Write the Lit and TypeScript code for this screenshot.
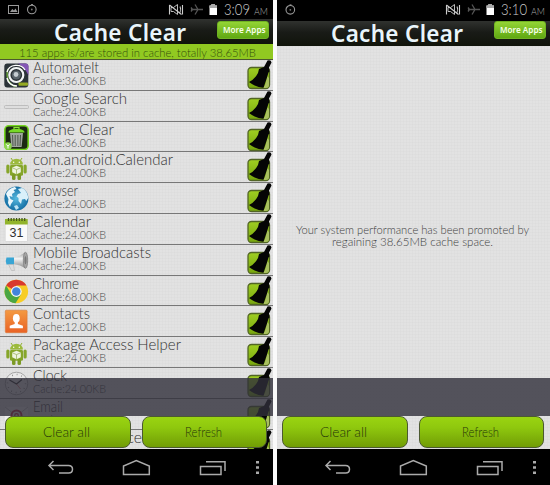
import { LitElement, html, svg, css, nothing } from "lit";
import { customElement, property } from "lit/decorators.js";

const fit = (text: string, width: number, size: number, height: number, base: number, cls = "", adjust = "spacingAndGlyphs") => html`
  <svg class="fit ${cls}" width=${width + 2} height=${height}>
    <text x="0" y=${base} font-size=${size} textLength=${width} lengthAdjust=${adjust}>${text}</text>
  </svg>`;

const android = svg`
  <path d="M7 3l2 3M18 3l-2 3" stroke="#8fae2b" stroke-width="1"/>
  <path d="M6 9.500a6.500 5.800 0 0 1 13 0z" fill="#9cba3c"/>
  <rect x="6" y="9.800" width="13" height="11" rx="1.500" fill="#86a62a"/>
  <rect x="2.300" y="9.500" width="3.200" height="9" rx="1.600" fill="#86a62a"/>
  <rect x="19.500" y="9.500" width="3.200" height="9" rx="1.600" fill="#86a62a"/>
  <rect x="8" y="19" width="3.500" height="6" rx="1.500" fill="#7c9a25"/>
  <rect x="13.500" y="19" width="3.500" height="6" rx="1.500" fill="#7c9a25"/>
  <circle cx="9.700" cy="7.200" r=".7" fill="#fff"/><circle cx="15.300" cy="7.200" r=".7" fill="#fff"/>
  <path d="M12.500 10.800l4.300 1.800v4.600l-4.300 2-4.300-2v-4.600z" fill="#eef3df"/>
  <path d="M8.400 12.800l4.100 1.800 4.100-1.800M12.500 14.600v4.400" stroke="#90aa50" stroke-width=".7" fill="none"/>`;

const icons: Record<string, unknown> = {
  automate: svg`
    <rect x=".3" y=".5" width="24" height="24" rx="3" fill="#2b3338"/>
    <path d="M14 .5h7.500a3 3 0 0 1 3 3v9C22 7 19 3 14 .5z" fill="#8457b5"/>
    <path d="M4 6C1.500 13 4 21 12 24" stroke="#6fae3a" stroke-width="1.300" fill="none"/>
    <path d="M3 9C5 1 17 0 21 7" stroke="#fff" stroke-width="1.300" fill="none"/>
    <circle cx="12.300" cy="12" r="7" fill="#2a3136" stroke="#f2f5f5" stroke-width="2.200"/>
    <circle cx="12.300" cy="12" r="4.500" fill="#59646a"/><circle cx="12" cy="11.500" r="2.400" fill="#c5cdd1"/>
    <path d="M3 15c1 5 5 8 10 8" stroke="#fff" stroke-width="1.500" fill="none"/>
    <rect x="14.500" y="19.600" width="9.500" height="3.200" rx="1" fill="#94a923"/>`,
  search: svg`<rect x=".5" y="11.500" width="24" height="3" rx="1" fill="#dedede" stroke="#b5b5b5" stroke-width=".8"/>`,
  trash: svg`
    <rect x=".8" y=".8" width="23.400" height="23.700" rx="4" fill="#1c2a12" stroke="#74d51d" stroke-width="1.600"/>
    <path d="M6 8h13l-1.400 14H7.400z" fill="#a0a69f"/>
    <path d="M8.500 10l.5 11M11.200 10v11M13.900 10v11M16.500 10l-.5 11" stroke="#454e43" stroke-width=".9"/>
    <path d="M10 4V2.500h5V4" stroke="#8ee43b" fill="none" stroke-width="1.200"/>
    <path d="M4.500 7.500c0-5 16-5 16 0z" fill="#77d928"/>
    <circle cx="4" cy="21" r="3.800" fill="#8fd552"/><path d="M2.300 19.500l1.700 1.500 1.700-1.500M4 21v2.500" stroke="#fff" fill="none" stroke-width="1"/>`,
  android,
  globe: svg`
    <circle cx="12.400" cy="12.500" r="12" fill="url(#globe)"/>
    <path d="M2 8C4 3.500 8 1.500 11 1l1.500 2-3 1 1.500 2-3 2 .5 3-3-1 1 3 3 1.500L7 18l-1 3-2-4 .5-4z" fill="#eaf7fc"/>
    <path d="M14 3l4-1c4 2 6 6 6.200 10l-2 3-1.200-2-3 .5-1 4.500-2.500-3V12l-2-1.500L14 8l3-1z" fill="#d9f0fa"/>
    <path d="M10 20l3-1 2 3-3 2z" fill="#bfe4f4"/>`,
  calendar: svg`
    <rect x="1.200" y="2" width="22.300" height="22.500" rx="1" fill="#fafafa" stroke="#ccc" stroke-width=".6"/>
    <path d="M1 2h22.700v5.500H1z" fill="#92b42c"/>
    <path d="M4.500 1v3M7.200 1v3M9.900 1v3M12.600 1v3M15.300 1v3M18 1v3M20.700 1v3" stroke="#42541a" stroke-width="1.200"/>
    <text x="12.400" y="20" font-size="12.500" font-family="Liberation Sans, sans-serif" font-weight="400" fill="#303030" text-anchor="middle">31</text>`,
  megaphone: svg`
    <path d="M2.500 9.500h7.500v7H2.500q-1.500-3.500 0-7z" fill="#39a5d4"/>
    <path d="M10 9.300c4-.5 8-2.500 11-5v16c-3-2.500-7-3.500-11-4z" fill="url(#metal)"/>
    <ellipse cx="21.500" cy="12.300" rx="2.200" ry="8" fill="#a5a5a5" stroke="#777" stroke-width=".7"/>
    <ellipse cx="21.500" cy="12.300" rx="1" ry="4" fill="#777"/>
    <path d="M4.500 16.500h5l1 6h-3z" fill="#ddd" stroke="#aaa" stroke-width=".5"/>`,
  chrome: svg`
    <circle cx="12.300" cy="12.500" r="11.800" fill="#f7cd25"/>
    <path d="M12.300 12.500L2.080 6.600A11.800 11.800 0 0 1 22.500 6.600H12.300z" fill="#d83a2f"/>
    <path d="M2.080 6.600A11.800 11.800 0 0 0 11.500 24.300l5.600-9-4.800-2.800-4.800 3z" fill="#4ba643"/>
    <circle cx="12.300" cy="12.500" r="5.400" fill="#f7f7f7"/><circle cx="12.300" cy="12.500" r="4.200" fill="#4284dc"/>`,
  contacts: svg`
    <rect x="1.300" y="1.200" width="21.800" height="22.500" rx="1" fill="url(#orange)" stroke="#d97b39" stroke-width=".6"/>
    <ellipse cx="12.300" cy="9.300" rx="3.400" ry="4.300" fill="#fff"/>
    <path d="M10.700 12h3.200v3l5 1.800v2.400H5.700v-2.400l5-1.800z" fill="#fff"/>`,
  clock: svg`
    <circle cx="12.500" cy="12.500" r="11.300" fill="#e9e9e9" stroke="#a5a5a5" stroke-width="1"/>
    <circle cx="12.500" cy="12.500" r="9" fill="none" stroke="#777" stroke-width="1.500" stroke-dasharray=".7 4.010"/>
    <path d="M5.500 9l7 4 5.500-4.500" stroke="#333" stroke-width="1.200" fill="none"/><path d="M12.500 13l4 5" stroke="#c55" stroke-width=".7"/>`,
  email: svg`
    <path d="M1 5h23v16H1z" fill="#eee"/><path d="M1 5l11.500 9L24 5" fill="none" stroke="#bbb"/>
    <circle cx="12.500" cy="13.500" r="5" fill="#eee" stroke="#c12845" stroke-width="2"/>
    <circle cx="12.500" cy="13.500" r="1.800" fill="none" stroke="#c12845" stroke-width="1.300"/>`,
};

const apps: [string, string, number, string][] = [
  ["automate", "AutomateIt", 66, "36.00KB"],
  ["search", "Google Search", 94, "24.00KB"],
  ["trash", "Cache Clear", 81, "36.00KB"],
  ["android", "com.android.Calendar", 140, "24.00KB"],
  ["globe", "Browser", 45, "24.00KB"],
  ["calendar", "Calendar", 58, "24.00KB"],
  ["megaphone", "Mobile Broadcasts", 118, "24.00KB"],
  ["chrome", "Chrome", 46, "68.00KB"],
  ["contacts", "Contacts", 57, "12.00KB"],
  ["android", "Package Access Helper", 148, "24.00KB"],
  ["clock", "Clock", 34, "24.00KB"],
  ["email", "Email", 30, "24.00KB"],
  ["", "Package Service", 109, ""],
];

@customElement("phone-screen")
class PhoneScreen extends LitElement {
  @property() time = "";
  @property({ type: Boolean }) cleared = false;

  static styles = css`
    :host { display: flex; flex-direction: column; position: relative; width: 273px; height: 485px; overflow: hidden; background: #000;
      font-family: Lato, sans-serif; font-weight: 300; }
    svg { display: block; flex: none; }
    .fit { overflow: visible; font-family: Lato, sans-serif; font-weight: 300; fill: #333; }
    .status { display: flex; height: 19px; flex: none; }
    .cleared .status { height: 21px; }
    .frame { display: flex; flex-direction: column; height: 449px; }
    .head { flex: none; height: 25px; display: flex; justify-content: space-between; padding: 0 4px 0 54px;
      background: linear-gradient(#30322f, #191b17 45%, #10140a); }
    .fit.title { font-family: "Noto Sans", sans-serif; font-weight: 600; fill: #e9f5fb; }
    .cleared .title { margin-top: -1px; }
    .more { margin-top: 2px; width: 52px; height: 18px; border-radius: 3px; box-sizing: border-box; padding-left: 4.500px;
      background: linear-gradient(#93d435, #60a812); border: 1px solid #70b322; }
    .cleared .more { margin-top: 0; }
    .fit.moretext { font-family: "Noto Sans", sans-serif; font-weight: 600; fill: #f6ffe9; }
    .banner { flex: none; height: 16px; box-sizing: border-box; padding-left: 19px; background: #91c921; border-bottom: 1px solid #4c5a2e; }
    .fit.bannertext { fill: #35500b; }
    .body { flex: 1; min-height: 0; overflow: hidden; background-color: #e2e2e2;
      background-image: repeating-linear-gradient(90deg, #d5d5d540 0 1px, transparent 1px 3px), repeating-linear-gradient(#d5d5d540 0 1px, transparent 1px 3px); }
    .row { height: 30.800px; box-sizing: border-box; border-bottom: 1px solid #777; display: flex; padding-left: 4px; }
    .icon { margin-top: 3px; margin-right: 4px; }
    .labels { flex: 1; }
    .fit.size { fill: #484848; }
    .broom { margin-right: 1px; overflow: visible; }
    .message { padding-top: 179px; display: flex; flex-direction: column; align-items: center; }
    .message .fit { fill: #404040; }
    .veil { position: absolute; left: 0; right: 0; top: 378px; height: 37.500px; background: rgba(48, 46, 58, .8); }
    .actions { position: absolute; left: 5px; top: 416px; display: flex; gap: 11px; }
    .action { width: 125.500px; height: 31.500px; box-sizing: border-box; border: 1px solid #4c5a30; border-radius: 8px;
      background: linear-gradient(#9ad411, #8fc80e 35%, #719d05); display: flex; justify-content: center; }
    .action .fit { fill: #26360a; }
    .nav { height: 36px; }
  `;

  render() {
    return html`<div class=${this.cleared ? "cleared" : ""}>
      <div class="frame">
        <div class="status">
          <svg width="273" height="19" fill="none">
            ${this.cleared ? nothing : svg`<rect x="8.500" y="5.500" width="10" height="8" stroke="#999"/><path d="M10 12l2.300-3 1.700 1.500 1.500-2L17.500 12z" fill="#999"/>`}
            <g transform=${this.cleared ? "translate(-18.500 .3)" : ""}><circle cx="31.800" cy="9.500" r="4.300" stroke="#999" stroke-width="1.100"/><path d="M31 4.600h2" stroke="#999"/><circle cx="31.800" cy="9.500" r=".9" fill="#777"/></g>
            <path d="M171 7.500h2.500l4-3v10l-4-3H171z" stroke="#bbb" stroke-width="1"/><path d="M169.500 5v9.500M169.500 5l12 9.500M180 6.500q1.500 3 0 6M182.500 5v9.500" stroke="#ccc" stroke-width="1.100"/>
            <path d="M191 9.500h12M198 9.500l-3-5M198 9.500l-3 5M192.500 9.500l-1.500-2M192.500 9.500l-1.500 2" stroke="#555" stroke-width="1.300"/>
            <path d="M209.500 5.500h2V4h3.500v1.500h2V15h-7.500z" fill="#fff"/><path d="M209.500 5.500h2V4h3.500v1.500h2V8h-7.500z" fill="#aaa"/>
            <text x="224" y="15.200" font-size="15.500" fill="#ccc" textLength="26" lengthAdjust="spacingAndGlyphs">${this.time}</text>
            <text x="254" y="15.200" font-size="10" fill="#aaa" textLength="14" lengthAdjust="spacingAndGlyphs">AM</text>
          </svg>
        </div>
        <div class="head">
          ${fit("Cache Clear", 132, 22.5, 25, 21.5, "title", "spacing")}
          <div class="more">${fit("More Apps", 42.5, 8.5, 16, 10.8, "moretext")}</div>
        </div>
        ${this.cleared ? nothing : html`<div class="banner">${fit("115 apps is/are stored in cache, totally 38.65MB", 237, 11.3, 15, 12.9, "bannertext")}</div>`}
        <div class="body">
          ${this.cleared
            ? html`<div class="message">
                ${fit("Your system performance has been promoted by", 233, 11.3, 12, 9)}
                ${fit("regaining 38.65MB cache space.", 161, 11.3, 12, 9)}
              </div>`
            : apps.map(([icon, name, w, size]) => html`
              <div class="row">
                <svg class="icon" width="25" height="25" fill="none">
                  <defs>
                    <radialGradient id="globe"><stop stop-color="#55b9df"/><stop offset="1" stop-color="#1670a5"/></radialGradient>
                    <linearGradient id="metal" x2="0" y2="1"><stop stop-color="#999"/><stop offset=".4" stop-color="#f4f4f4"/><stop offset="1" stop-color="#888"/></linearGradient>
                    <linearGradient id="orange" x2="0" y2="1"><stop stop-color="#f49a42"/><stop offset="1" stop-color="#e96225"/></linearGradient>
                  </defs>
                  ${icons[icon] ?? nothing}
                </svg>
                <div class="labels">
                  ${fit(name, w, 14.7, 16, 13.2)}
                  ${size ? fit("Cache:" + size, 73, 11, 13, 9.3, "size") : nothing}
                </div>
                <svg class="broom" width="25" height="30" fill="none">
                  <defs><linearGradient id="lime" x2="0" y2="1"><stop stop-color="#9fce22"/><stop offset="1" stop-color="#77a70c"/></linearGradient></defs>
                  <rect x="1" y="7.500" width="21.500" height="21" rx="3.500" fill="url(#lime)" stroke="#526525" stroke-width="1.300"/>
                  <path d="M16 28q3-3 4-12l2 2v7q0 3-3 3z" fill="#a9c060"/>
                  <path d="M20.500.5q3.500-1 4 2l-2.500 5 .5 4-1 1-1.500 5-3.500 10.200Q9 27.500 2 22q6-3 9-9l1-4 5-2z" fill="#050505"/>
                </svg>
              </div>`)}
        </div>
      </div>
      <div class="nav">
        <svg width="273" height="36" fill="none" stroke="#aaa" stroke-width="1.500">
          <path d="M53.500 12l-4.500 4.500 4.500 4.500M49 16.500h19.500q4 0 4 3.800t-4 3.700H59"/>
          <path d="M123.500 25.500V17l12.800-5.500 13 5.500v8.500z"/>
          <path d="M200.500 17.500h20.500v8h-20.500zM206 12.800h19V22"/>
          <path d="M256 13.300h3M256 18.500h3M256 23.700h3" stroke-width="2.400"/>
        </svg>
      </div>
      <div class="veil"></div>
      <div class="actions">
        <div class="action">${fit("Clear all", 47, 12.7, 29, 19.7)}</div>
        <div class="action">${fit("Refresh", 37, 12.7, 29, 19.7)}</div>
      </div>
    </div>`;
  }
}

@customElement("app-root")
class AppRoot extends LitElement {
  static styles = css`
    :host { display: flex; gap: 4px; width: 550px; height: 485px; overflow: hidden; background: #fafafa; }
  `;
  render() {
    return html`<phone-screen time="3:09"></phone-screen><phone-screen time="3:10" cleared></phone-screen>`;
  }
}
